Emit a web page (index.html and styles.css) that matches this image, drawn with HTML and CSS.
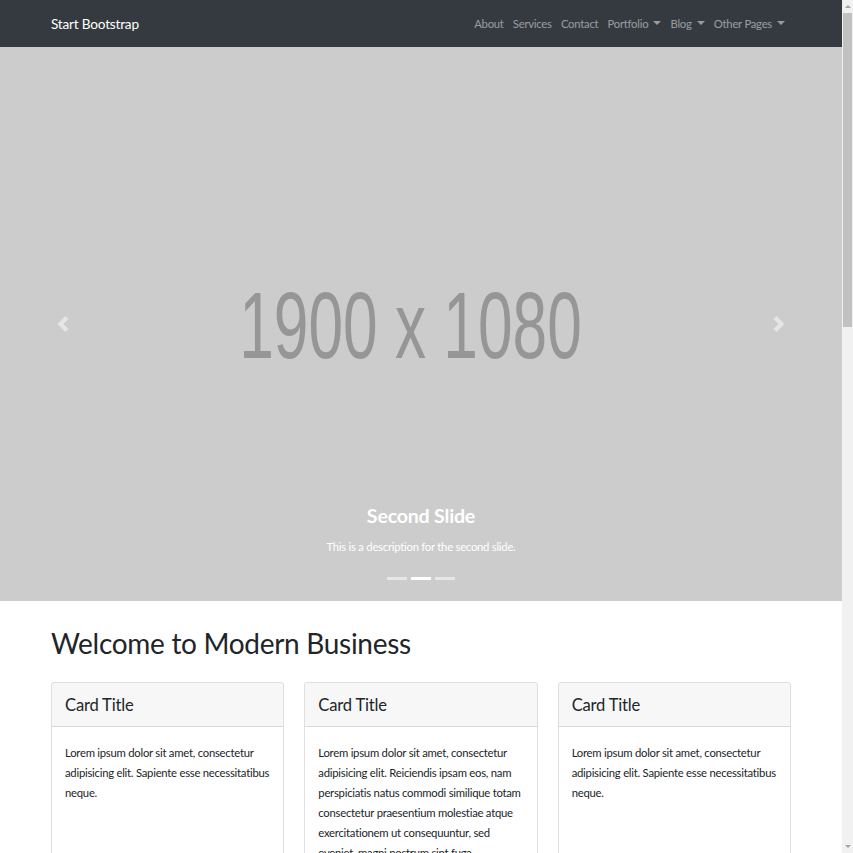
FILE: index.html
```html
<!DOCTYPE html>
<html lang="en">
<head>
<meta charset="utf-8">
<title>Modern Business - Start Bootstrap Template</title>
<link rel="stylesheet" href="styles.css">
</head>
<body>
<div class="page">
<nav class="navbar">
  <div class="container nav-inner">
    <a class="brand" href="#">Start Bootstrap</a>
    <ul class="nav-links">
      <li><a href="#">About</a></li>
      <li><a href="#">Services</a></li>
      <li><a href="#">Contact</a></li>
      <li><a href="#" class="dropdown">Portfolio</a></li>
      <li><a href="#" class="dropdown">Blog</a></li>
      <li><a href="#" class="dropdown">Other Pages</a></li>
    </ul>
  </div>
</nav>

<header class="carousel">
  <div class="slide"><span class="ph-text">1900 x 1080</span></div>
  <a class="ctrl prev" href="#"><svg viewBox="0 0 8 8" width="16" height="16"><path d="M5.25 0l-4 4 4 4 1.5-1.5L4.25 4l2.5-2.5L5.25 0z" fill="#fff"/></svg></a>
  <a class="ctrl next" href="#"><svg viewBox="0 0 8 8" width="16" height="16"><path d="M2.75 0l-1.5 1.5L3.75 4l-2.5 2.5L2.75 8l4-4-4-4z" fill="#fff"/></svg></a>
  <div class="caption">
    <h3>Second Slide</h3>
    <p>This is a description for the second slide.</p>
  </div>
  <ol class="indicators"><li></li><li class="active"></li><li></li></ol>
</header>

<main class="container">
  <h1 class="page-title">Welcome to Modern Business</h1>
  <div class="cards">
    <div class="card">
      <h4 class="card-header">Card Title</h4>
      <div class="card-body"><p>Lorem ipsum dolor sit amet, consectetur adipisicing elit. Sapiente esse necessitatibus neque.</p></div>
      <div class="card-footer"><a class="btn" href="#">Learn More</a></div>
    </div>
    <div class="card">
      <h4 class="card-header">Card Title</h4>
      <div class="card-body"><p>Lorem ipsum dolor sit amet, consectetur adipisicing elit. Reiciendis ipsam eos, nam perspiciatis natus commodi similique totam consectetur praesentium molestiae atque exercitationem ut consequuntur, sed eveniet, magni nostrum sint fuga.</p></div>
      <div class="card-footer"><a class="btn" href="#">Learn More</a></div>
    </div>
    <div class="card">
      <h4 class="card-header">Card Title</h4>
      <div class="card-body"><p>Lorem ipsum dolor sit amet, consectetur adipisicing elit. Sapiente esse necessitatibus neque.</p></div>
      <div class="card-footer"><a class="btn" href="#">Learn More</a></div>
    </div>
  </div>

  <h2 class="section-title">Portfolio Heading</h2>
  <div class="portfolio">
    <div class="pcard"><div class="pimg">700 x 400</div><div class="pbody"><h4>Project One</h4><p>Lorem ipsum dolor sit amet, consectetur adipisicing elit. Amet numquam aspernatur eum quasi sapiente nesciunt?</p></div></div>
    <div class="pcard"><div class="pimg">700 x 400</div><div class="pbody"><h4>Project Two</h4><p>Lorem ipsum dolor sit amet, consectetur adipiscing elit. Nam viverra euismod odio, gravida pellentesque urna varius vitae.</p></div></div>
    <div class="pcard"><div class="pimg">700 x 400</div><div class="pbody"><h4>Project Three</h4><p>Lorem ipsum dolor sit amet, consectetur adipisicing elit. Quos quisquam, error quod sed cumque.</p></div></div>
    <div class="pcard"><div class="pimg">700 x 400</div><div class="pbody"><h4>Project Four</h4><p>Lorem ipsum dolor sit amet, consectetur adipiscing elit. Nam viverra euismod odio, gravida pellentesque urna varius vitae.</p></div></div>
  </div>
  <hr>
  <div class="cta">
    <p>Lorem ipsum dolor sit amet, consectetur adipisicing elit. Molestias, expedita, saepe, vero rerum deleniti beatae veniam harum neque nemo praesentium cum alias asperiores commodi.</p>
    <a class="btn btn-dark" href="#">Call to Action</a>
  </div>
</main>
<footer class="footer"><p>Copyright &copy; Your Website 2019</p></footer>
</div>
<div class="scrollbar" aria-hidden="true">
  <div class="sb-btn"><span class="arrow-up"></span></div>
  <div class="sb-track"><div class="sb-thumb"></div></div>
  <div class="sb-btn"><span class="arrow-down"></span></div>
</div>
</body>
</html>
```

FILE: styles.css
```css
* { box-sizing: border-box; }
html, body { margin: 0; }
body {
  display: flex;
  align-items: flex-start;
  font-family: Lato, "Noto Sans", sans-serif;
  font-size: 11.3px;
  letter-spacing: -0.25px;
  line-height: 20px;
  color: #212529;
  background: #fff;
}
a { text-decoration: none; }
.page { flex: 1; min-width: 0; }
.container {
  width: 740px;
  margin: 0 auto;
}

/* scrollbar */
.scrollbar {
  position: sticky;
  top: 0;
  flex: none;
  width: 11px;
  height: 100vh;
  background: #f1f1f1;
  display: flex;
  flex-direction: column;
}
.sb-btn {
  height: 13px;
  display: flex;
  align-items: center;
  justify-content: center;
}
.arrow-up, .arrow-down {
  width: 0;
  height: 0;
  border-left: 3px solid transparent;
  border-right: 3px solid transparent;
}
.arrow-up { border-bottom: 3px solid #a3a3a3; }
.arrow-down { border-top: 3px solid #a3a3a3; }
.sb-track { flex: 1; padding: 0 1px; }
.sb-thumb { height: 314px; background: #c1c1c1; }

/* navbar */
.navbar { background: #343a40; height: 47px; }
.nav-inner {
  height: 47px;
  display: flex;
  align-items: center;
  justify-content: space-between;
}
.brand { color: #fff; font-size: 13.6px; letter-spacing: -0.2px; line-height: 24px; }
.nav-links {
  list-style: none;
  margin: 0;
  padding: 0;
  display: flex;
}
.nav-links a {
  display: block;
  padding: 0 4.6px;
  color: rgba(255,255,255,.5);
  line-height: 20px;
}
.nav-links li:last-child a { padding-right: 6px; }
.dropdown::after {
  content: "";
  display: inline-block;
  margin-left: 5px;
  vertical-align: 3px;
  border-top: 4px solid;
  border-left: 4px solid transparent;
  border-right: 4px solid transparent;
}

/* carousel */
.carousel {
  position: relative;
  height: 554px;
  background: #ccc;
  overflow: hidden;
}
.slide {
  height: 100%;
  display: flex;
  align-items: center;
  justify-content: center;
  padding-right: 22px;
  padding-top: 2px;
}
.ph-text {
  font-family: "Liberation Sans", Arial, sans-serif;
  font-size: 95px;
  letter-spacing: 0;
  line-height: 1;
  color: #969696;
  transform: scaleX(0.655);
  white-space: nowrap;
}
.ctrl {
  position: absolute;
  top: 0;
  bottom: 0;
  width: 15%;
  display: flex;
  align-items: center;
  justify-content: center;
  opacity: .5;
}
.ctrl.prev { left: 0; }
.ctrl.next { right: 0; }
.caption {
  position: absolute;
  left: 15%;
  right: 15%;
  bottom: 16px;
  padding: 16px 0;
  text-align: center;
  color: #fff;
}
.caption h3 {
  margin: 0 0 8.4px;
  font-size: 19.6px;
  letter-spacing: -0.2px;
  font-weight: 700;
  line-height: 27px;
}
.caption p { margin: 0 0 12.8px; line-height: 19.2px; }
.indicators {
  position: absolute;
  left: 0;
  right: 0;
  bottom: 21px;
  margin: 0;
  padding: 0;
  list-style: none;
  display: flex;
  justify-content: center;
  gap: 4px;
}
.indicators li { width: 20px; height: 3px; background: rgba(255,255,255,.5); }
.indicators li.active { background: #fff; }

/* main */
.page-title {
  margin: 23px 0 19.5px;
  font-size: 28px;
  letter-spacing: -0.3px;
  font-weight: 400;
  line-height: 38.4px;
}
.cards {
  display: grid;
  grid-template-columns: repeat(3, 1fr);
  gap: 20px;
}
.card {
  display: flex;
  flex-direction: column;
  border: 1px solid rgba(0,0,0,.125);
  border-radius: 3px;
  overflow: hidden;
}
.card-header {
  margin: 0;
  padding: 11px 13px 9px;
  background: rgba(0,0,0,.03);
  border-bottom: 1px solid rgba(0,0,0,.125);
  font-size: 16.6px;
  letter-spacing: -0.2px;
  font-weight: 400;
  line-height: 23px;
}
.card-body { flex: 1; padding: 16px 13px; }
.card-body p { margin: 0; }
.card-footer {
  padding: 9.6px 13px;
  background: rgba(0,0,0,.03);
  border-top: 1px solid rgba(0,0,0,.125);
}
.btn {
  display: inline-block;
  padding: 5px 10px;
  border-radius: 3px;
  background: #007bff;
  color: #fff;
}
.btn-dark { background: #343a40; }
.section-title {
  margin: 40px 0 16px;
  font-size: 23px;
  font-weight: 400;
  line-height: 1.2;
}
.portfolio {
  display: grid;
  grid-template-columns: 1fr 1fr;
  gap: 20px;
}
.pcard { border: 1px solid rgba(0,0,0,.125); border-radius: 3px; overflow: hidden; }
.pimg {
  height: 205px;
  background: #ccc;
  color: #969696;
  font-family: "Liberation Sans", Arial, sans-serif;
  font-size: 40px;
  display: flex;
  align-items: center;
  justify-content: center;
}
.pbody { padding: 16px 13px; }
.pbody h4 { margin: 0 0 10px; font-size: 16.6px; font-weight: 400; color: #007bff; }
.pbody p { margin: 0; }
hr { margin: 32px 0; border: 0; border-top: 1px solid rgba(0,0,0,.1); }
.cta {
  display: flex;
  align-items: center;
  gap: 24px;
  margin-bottom: 32px;
}
.cta p { margin: 0; flex: 1; }
.footer {
  background: #343a40;
  padding: 38px 0;
  text-align: center;
  color: #fff;
}
.footer p { margin: 0; }
```
